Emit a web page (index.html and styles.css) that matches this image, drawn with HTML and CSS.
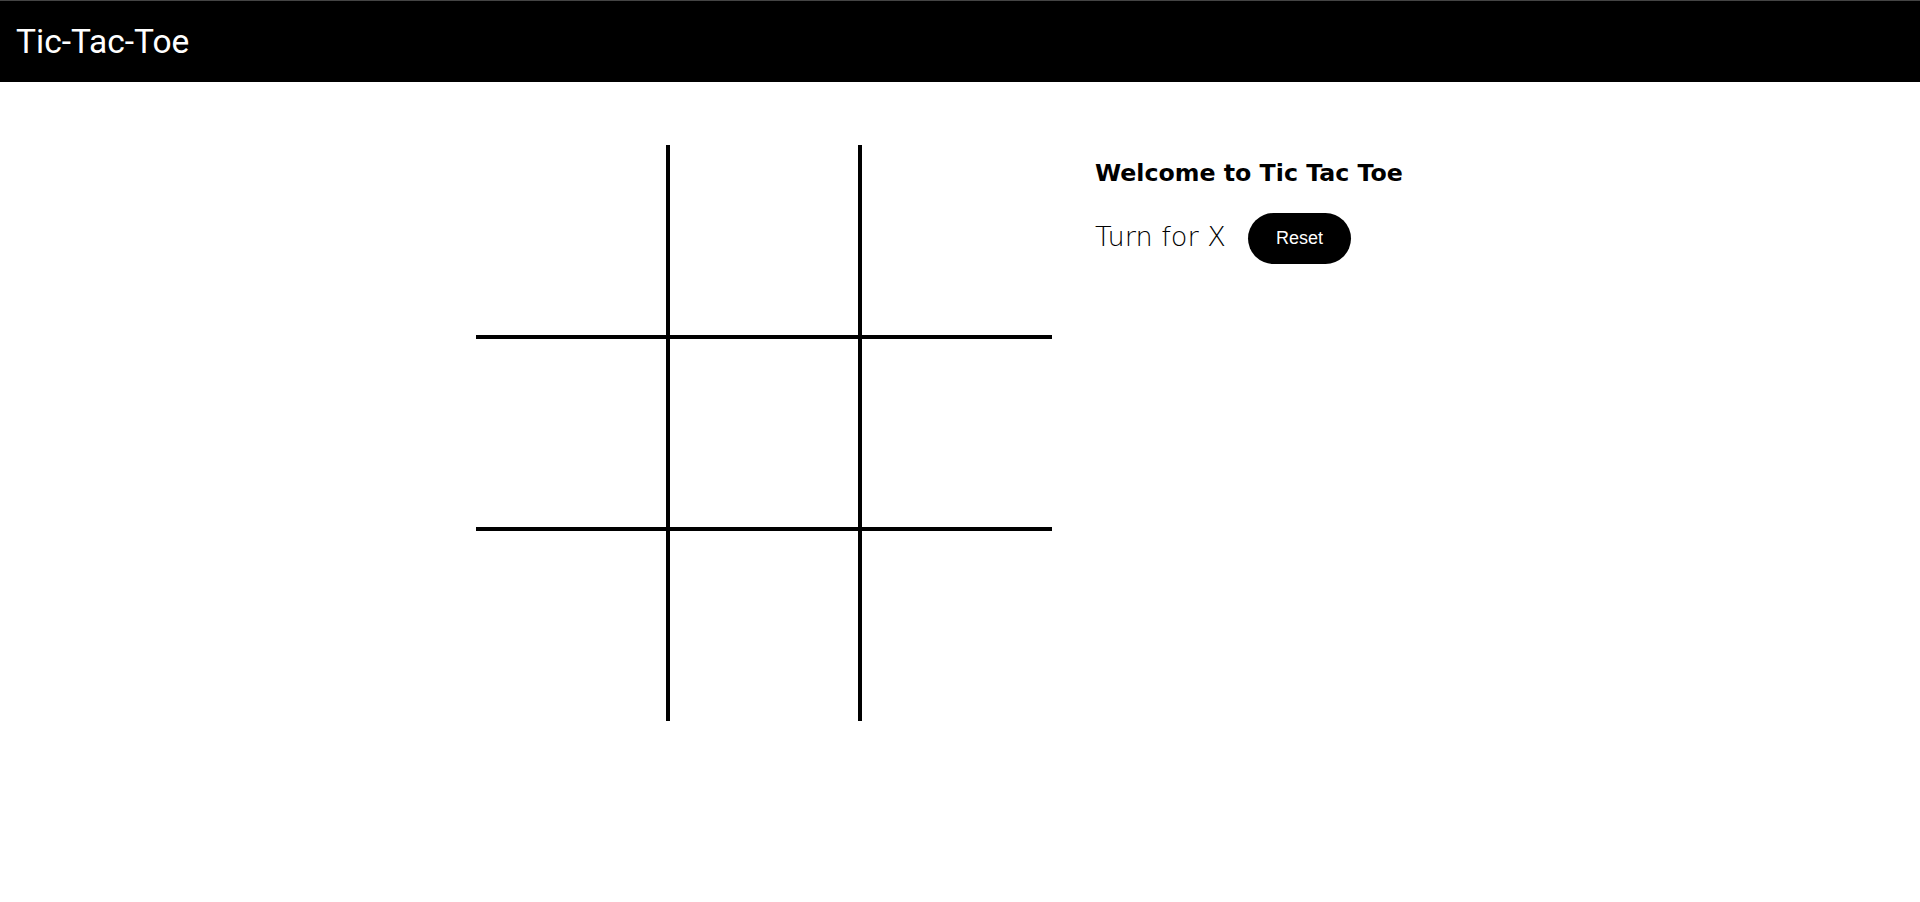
FILE: index.html
```html
<!DOCTYPE html>
<html lang="en">
<head>
<meta charset="utf-8">
<title>Tic-Tac-Toe</title>
<link rel="stylesheet" href="styles.css">
</head>
<body>
<nav class="nav">
  <span class="nav-title">Tic-Tac-Toe</span>
</nav>
<main class="game">
  <div class="board">
    <div class="cell no-top no-left"></div>
    <div class="cell no-top"></div>
    <div class="cell no-top no-right"></div>
    <div class="cell no-left"></div>
    <div class="cell"></div>
    <div class="cell no-right"></div>
    <div class="cell no-bottom no-left"></div>
    <div class="cell no-bottom"></div>
    <div class="cell no-bottom no-right"></div>
  </div>
  <div class="info">
    <h1 class="welcome">Welcome to Tic Tac Toe</h1>
    <div class="status">
      <span class="turn">Turn for X</span>
      <button class="reset">Reset</button>
    </div>
  </div>
</main>
</body>
</html>
```

FILE: styles.css
```css
* { box-sizing: border-box; }
body {
  margin: 0;
  background: #fff;
  font-family: "DejaVu Sans", sans-serif;
}
.nav {
  height: 82px;
  background: #000;
  border-top: 1px solid #444;
  display: flex;
  align-items: center;
  padding-left: 16px;
}
.nav-title {
  color: #fff;
  font-family: Roboto, sans-serif;
  font-size: 33.5px;
  line-height: 1;
  padding-top: 1px;
}
.game {
  display: flex;
  justify-content: center;
  gap: 43px;
  margin-top: 63px;
}
.board {
  display: grid;
  grid-template-columns: repeat(3, 192px);
  grid-template-rows: repeat(3, 192px);
}
.cell {
  border: 2px solid #000;
}
.no-top { border-top: 0; }
.no-bottom { border-bottom: 0; }
.no-left { border-left: 0; }
.no-right { border-right: 0; }
.info {
  width: 349px;
  padding-top: 12px;
}
.welcome {
  margin: 0;
  font-family: "DejaVu Sans", sans-serif;
  font-weight: 700;
  font-size: 23.7px;
  line-height: 32px;
  color: #000;
}
.status {
  display: flex;
  align-items: center;
  gap: 22px;
  margin-top: 24px;
}
.turn {
  font-family: "DejaVu Sans ExtraLight", "DejaVu Sans", sans-serif;
  font-weight: 200;
  font-size: 27.2px;
  color: #000;
  margin-bottom: 4px;
}
.reset {
  background: #000;
  color: #fff;
  border: 0;
  border-radius: 26px;
  height: 51px;
  padding: 0 28px;
  font-family: "Liberation Sans", Arial, sans-serif;
  font-size: 18px;
}
```
